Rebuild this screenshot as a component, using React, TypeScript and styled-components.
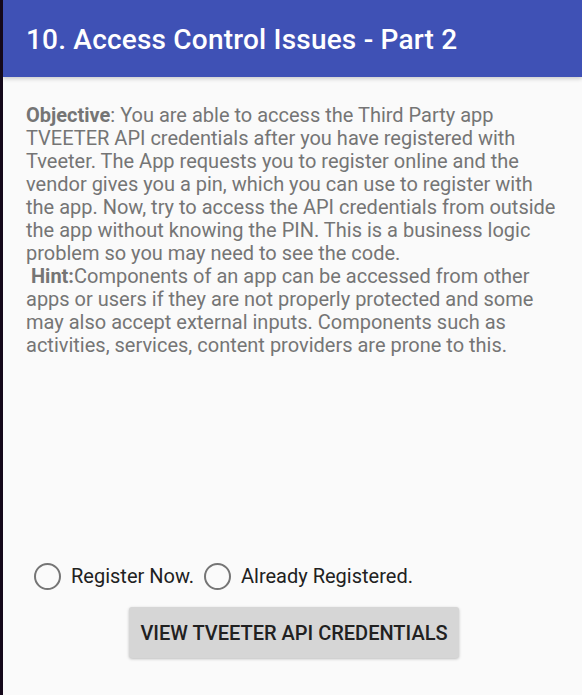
import React from "react";
import styled, { createGlobalStyle } from "styled-components";

const Global = createGlobalStyle`
  html, body { margin: 0; padding: 0; }
  body { background: #14081a; font-family: Roboto, "Noto Sans", sans-serif; }
`;

const Screen = styled.div`
  display: flex;
  flex-direction: column;
  width: 579px;
  height: 695px;
  margin-left: 3px;
  background: #fafafa;
  overflow: hidden;
`;

const AppBar = styled.header`
  display: flex;
  align-items: center;
  height: 77px;
  padding-left: 23px;
  background: #3f51b5;
  box-shadow: 0 2px 4px rgba(0, 0, 0, 0.18);
  position: relative;
  z-index: 1;
`;

const Title = styled.h1`
  margin: 0;
  padding-top: 1px;
  font-family: Roboto, sans-serif;
  font-weight: 500;
  font-size: 28px;
  letter-spacing: 0.2px;
  color: #ffffff;
`;

const Content = styled.main`
  flex: 1;
  display: flex;
  flex-direction: column;
  padding: 27px 20px 0 23px;
`;

const Body = styled.p`
  margin: 0;
  font-family: Roboto, sans-serif;
  font-size: 20px;
  line-height: 23px;
  color: #757575;
  white-space: nowrap;
`;

const Strong = styled.b`
  font-weight: 700;
`;

const Spacer = styled.div`
  flex: 1;
`;

const RadioRow = styled.div`
  display: flex;
  align-items: center;
  gap: 10px;
  height: 30px;
  margin-left: 8px;
  margin-bottom: 16px;
`;

const RadioOption = styled.label`
  display: flex;
  align-items: center;
  gap: 10px;
  font-family: Roboto, sans-serif;
  font-size: 20px;
  color: #212121;
`;

const RadioCircle = styled.span`
  display: inline-block;
  box-sizing: border-box;
  width: 27px;
  height: 27px;
  border: 2.5px solid #757575;
  border-radius: 50%;
`;

const ButtonRow = styled.div`
  display: flex;
  margin-left: 103px;
  margin-bottom: 37px;
`;

const Button = styled.button`
  width: 330px;
  height: 51px;
  border: none;
  border-radius: 3px;
  background: #d6d6d6;
  box-shadow: 0 1px 3px rgba(0, 0, 0, 0.25);
  font-family: Roboto, sans-serif;
  font-weight: 500;
  font-size: 20px;
  color: #212121;
  padding: 0;
`;

export default function App() {
  return (
    <>
      <Global />
      <Screen>
        <AppBar>
          <Title>10. Access Control Issues - Part 2</Title>
        </AppBar>
        <Content>
          <Body>
            <Strong>Objective</Strong>: You are able to access the Third Party app
            <br />
            TVEETER API credentials after you have registered with
            <br />
            Tveeter. The App requests you to register online and the
            <br />
            vendor gives you a pin, which you can use to register with
            <br />
            the app. Now, try to access the API credentials from outside
            <br />
            the app without knowing the PIN. This is a business logic
            <br />
            problem so you may need to see the code.
            <br />
            &nbsp;<Strong>Hint:</Strong>Components of an app can be accessed from other
            <br />
            apps or users if they are not properly protected and some
            <br />
            may also accept external inputs. Components such as
            <br />
            activities, services, content providers are prone to this.
          </Body>
          <Spacer />
          <RadioRow>
            <RadioOption>
              <RadioCircle />
              Register Now.
            </RadioOption>
            <RadioOption>
              <RadioCircle />
              Already Registered.
            </RadioOption>
          </RadioRow>
          <ButtonRow>
            <Button>VIEW TVEETER API CREDENTIALS</Button>
          </ButtonRow>
        </Content>
      </Screen>
    </>
  );
}
